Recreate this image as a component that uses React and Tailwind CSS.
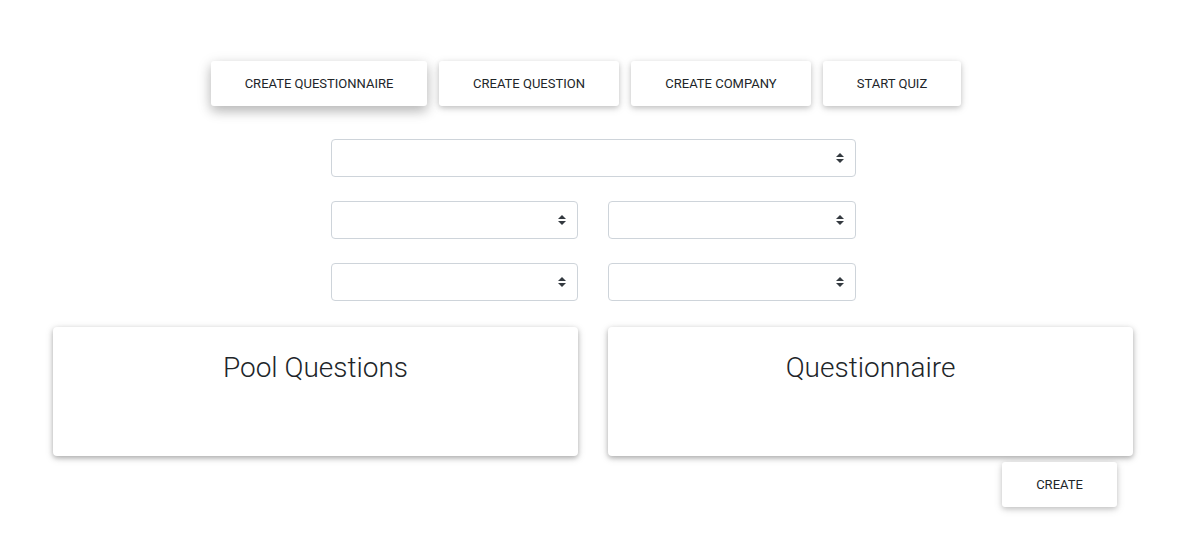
import React from 'react';

const btnShadow = 'shadow-[0_2px_5px_0_rgba(0,0,0,0.16),0_2px_10px_0_rgba(0,0,0,0.12)]';
const cardShadow = 'shadow-[0_2px_5px_0_rgba(0,0,0,0.26),0_2px_10px_0_rgba(0,0,0,0.12)]';

const Arrows = () => (
    <svg width="8" height="10" viewBox="0 0 8 10" className="text-[#343a40]">
        <path d="M4 0L0 4h8z M4 10L0 6h8z" fill="currentColor" />
    </svg>
);

const Select = ({ className }) => (
    <div className={`h-[38px] border border-[#ced4da] rounded-[4px] bg-white flex items-center justify-end pr-[11px] ${className}`}>
        <Arrows />
    </div>
);

const App = () => {
    const buttons = [
        { label: 'CREATE QUESTIONNAIRE', w: 'w-[216px]', raised: true },
        { label: 'CREATE QUESTION', w: 'w-[180px]' },
        { label: 'CREATE COMPANY', w: 'w-[180px]' },
        { label: 'START QUIZ', w: 'w-[138px]' },
    ];

    return (
        <div className="min-h-[547px] bg-white text-[#212529] font-['Roboto',sans-serif]">
            {/* Top actions */}
            <div className="flex gap-[12px] pt-[61px] pl-[211px]">
                {buttons.map((b, i) => (
                    <button
                        key={i}
                        className={`${b.w} h-[45px] pt-[1px] bg-white rounded-[3px] text-[13px] text-[#212529] ${b.raised ? 'shadow-[0_5px_11px_0_rgba(0,0,0,0.18),0_4px_15px_0_rgba(0,0,0,0.15)]' : btnShadow}`}
                    >
                        {b.label}
                    </button>
                ))}
            </div>

            {/* Filters */}
            <div className="ml-[331px] w-[525px] mt-[33px] flex flex-col gap-[24px]">
                <Select className="w-[525px]" />
                <div className="flex justify-between">
                    <Select className="w-[247px]" />
                    <Select className="w-[248px]" />
                </div>
                <div className="flex justify-between">
                    <Select className="w-[247px]" />
                    <Select className="w-[248px]" />
                </div>
            </div>

            {/* Cards */}
            <div className="ml-[53px] w-[1080px] mt-[26px] grid grid-cols-2 gap-[30px]">
                {['Pool Questions', 'Questionnaire'].map((t) => (
                    <div key={t} className={`h-[129px] bg-white rounded-[4px] ${cardShadow} pt-[24px]`}>
                        <h2 className="text-center text-[28px] font-light leading-[1.2]">{t}</h2>
                    </div>
                ))}
            </div>

            <div className="ml-[53px] w-[1080px] flex justify-end pr-[16px] mt-[6px]">
                <button className={`w-[115px] h-[45px] bg-white rounded-[3px] text-[13px] text-[#212529] ${btnShadow}`}>
                    CREATE
                </button>
            </div>
        </div>
    );
};

export default App;
